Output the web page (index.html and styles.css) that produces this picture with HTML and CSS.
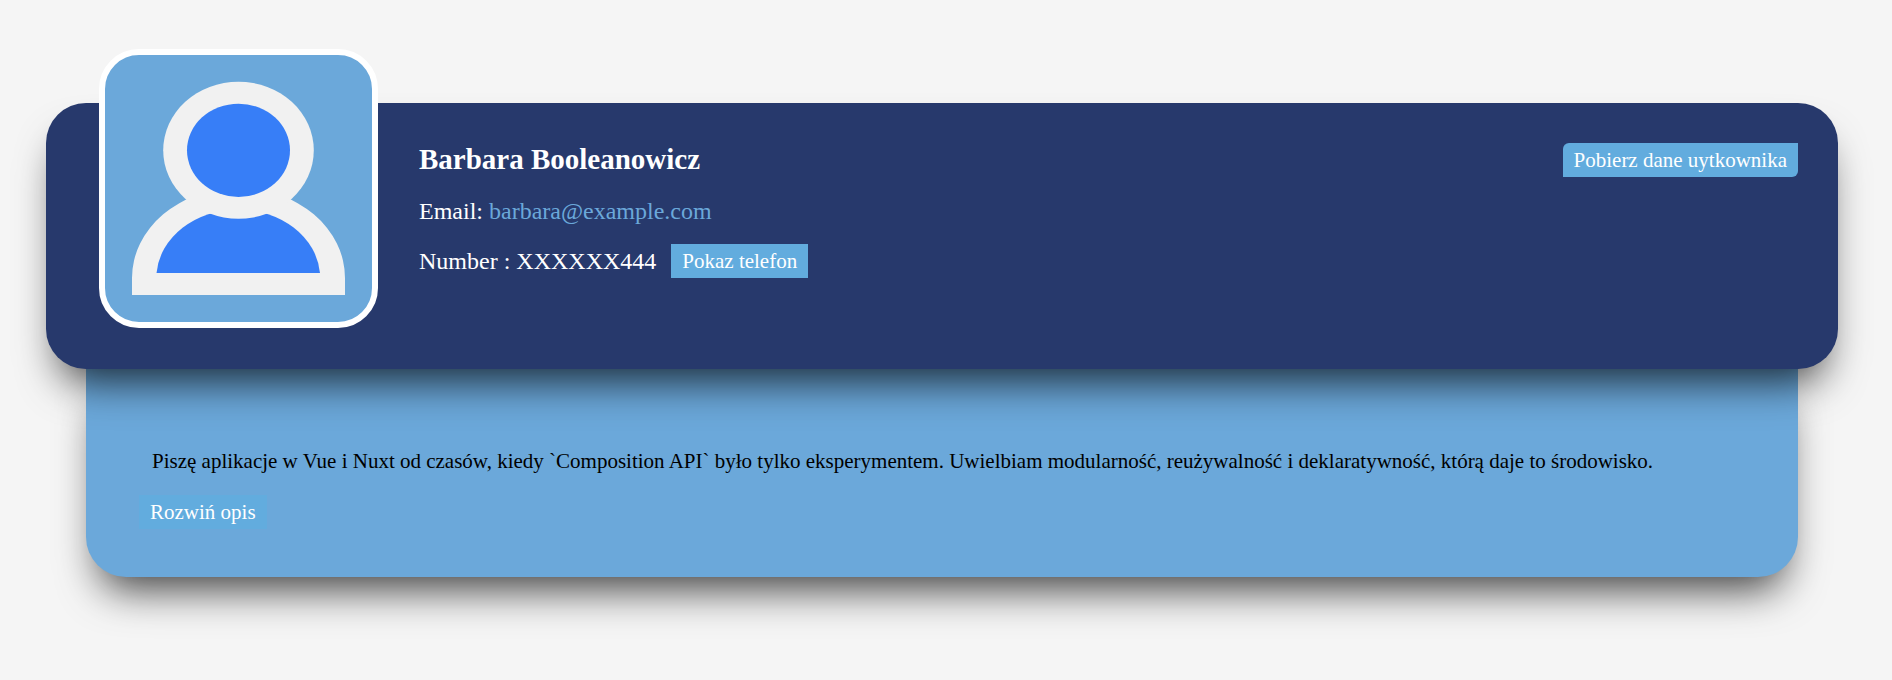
FILE: index.html
```html
<!DOCTYPE html>
<html lang="pl">
<head>
<meta charset="utf-8">
<meta name="viewport" content="width=device-width, initial-scale=1">
<title>Barbara Booleanowicz</title>
<link rel="stylesheet" href="styles.css">
</head>
<body>
<main class="profile">
  <header class="profile-header">
    <div class="avatar">
      <svg class="avatar-icon" viewBox="0 0 267 267" role="img" aria-label="Avatar">
        <path fill="#f1f1f1" d="M27 240V223A106.500 90 0 0 1 240 223V240Z"/>
        <path fill="#377ef7" d="M51.500 218A82 69 0 0 1 215 218Z"/>
        <ellipse fill="#f1f1f1" cx="133.500" cy="95.300" rx="75.300" ry="68.500"/>
        <ellipse fill="#377ef7" cx="133.500" cy="95.300" rx="51.500" ry="46.600"/>
      </svg>
    </div>
    <div class="details">
      <h1 class="name">Barbara Booleanowicz</h1>
      <p class="contact">Email: <a class="email" href="mailto:barbara@example.com">barbara@example.com</a></p>
      <p class="contact phone"><span>Number : XXXXXX444</span><button class="button" type="button">Pokaz telefon</button></p>
    </div>
    <button class="button button-download" type="button">Pobierz dane uytkownika</button>
  </header>
  <section class="about">
    <p class="about-text">Piszę aplikacje w Vue i Nuxt od czasów, kiedy `Composition API` było tylko eksperymentem. Uwielbiam modularność, reużywalność i deklaratywność, którą daje to środowisko.</p>
    <button class="button" type="button">Rozwiń opis</button>
  </section>
</main>
</body>
</html>
```
FILE: styles.css
```css
* {
  box-sizing: border-box;
}

body {
  margin: 0;
  background: #f5f5f5;
  font-family: "Liberation Serif", "Times New Roman", serif;
  font-size: 21px;
}

.profile {
  padding: 103px 54px 103px 46px;
}

.profile-header {
  position: relative;
  z-index: 1;
  display: flex;
  align-items: flex-start;
  min-height: 266px;
  padding: 40px 40px 40px 53px;
  border-radius: 40px;
  background: #27396c;
  color: #fff;
  box-shadow: 0 26px 42px -14px rgba(0, 0, 0, 0.75);
}

.avatar {
  flex: none;
  width: 279px;
  height: 279px;
  margin: -94px 41px -53px 0;
  border: 6px solid #fff;
  border-radius: 40px;
  background: #6ba8da;
  overflow: hidden;
}

.avatar-icon {
  display: block;
  width: 100%;
}

.details {
  flex: 1;
}

.name {
  margin: 0 0 19px;
  font-size: 29px;
  line-height: 32px;
}

.contact {
  margin: 0 0 16px;
  font-size: 24px;
  line-height: 34px;
}

.phone {
  display: flex;
  flex-wrap: wrap;
  align-items: center;
  gap: 15px;
}

.email {
  color: #6ba8da;
  text-decoration: none;
}

.button {
  padding: 5px 11px;
  border: 0;
  background: #62acde;
  color: #fff;
  font-family: inherit;
  font-size: 21px;
  line-height: 24px;
  cursor: pointer;
}

.button-download {
  border-radius: 6px 0;
}

.about {
  margin: 0 40px;
  padding: 80px 53px 48px;
  border-radius: 0 0 40px 40px;
  background: #6ba8da;
  color: #000;
  box-shadow: 0 26px 42px -14px rgba(0, 0, 0, 0.75);
}

.about-text {
  margin: 0 0 22px;
  padding: 0 13px;
  line-height: 24px;
}
```
